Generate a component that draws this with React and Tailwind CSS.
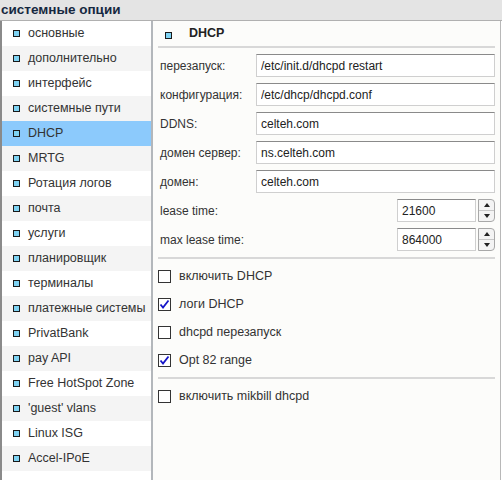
import { useState } from 'react';

const menu = [
    'основные',
    'дополнительно',
    'интерфейс',
    'системные пути',
    'DHCP',
    'MRTG',
    'Ротация логов',
    'почта',
    'услуги',
    'планировщик',
    'терминалы',
    'платежные системы',
    'PrivatBank',
    'pay API',
    'Free HotSpot Zone',
    "'guest' vlans",
    'Linux ISG',
    'Accel-IPoE'
];

const fields = [
    { label: 'перезапуск:', value: '/etc/init.d/dhcpd restart' },
    { label: 'конфигурация:', value: '/etc/dhcp/dhcpd.conf' },
    { label: 'DDNS:', value: 'celteh.com' },
    { label: 'домен сервер:', value: 'ns.celteh.com' },
    { label: 'домен:', value: 'celteh.com' }
];

const Bullet = () => (
    <span className="inline-block w-[7px] h-[7px] border border-[#1a1a1a] bg-[#7fd3f3] shrink-0" />
);

const Check = ({ checked, label, onToggle }) => (
    <div className="h-[28px] flex items-center cursor-pointer" onClick={onToggle}>
        <span className="w-[13px] h-[13px] border border-[#333] bg-white flex items-center justify-center">
            {checked && (
                <svg width="11" height="11" viewBox="0 0 11 11">
                    <path d="M1.5 5.5 L4 8.5 L9.5 1.5" fill="none" stroke="#1515c8" strokeWidth="1.8" />
                </svg>
            )}
        </span>
        <span className="ml-[8px] text-[12.5px] text-[#333]">{label}</span>
    </div>
);

const Spinner = () => (
    <div className="w-[17px] h-[23px] border border-[#a8a8a8] rounded-r-[4px] flex flex-col bg-[#f4f4f4] ml-[2px]">
        <div className="flex-1 flex items-center justify-center border-b border-[#c8c8c8]">
            <span className="w-0 h-0 border-l-[3px] border-r-[3px] border-b-[4px] border-l-transparent border-r-transparent border-b-[#222]" />
        </div>
        <div className="flex-1 flex items-center justify-center">
            <span className="w-0 h-0 border-l-[3px] border-r-[3px] border-t-[4px] border-l-transparent border-r-transparent border-t-[#222]" />
        </div>
    </div>
);

const inputCls = 'h-[23px] border border-[#cfcfcf] border-t-[#8a8a8a] bg-white px-[4px] text-[12px] text-[#222] outline-none';

export default function App() {
    const [checks, setChecks] = useState({ dhcp: false, logs: true, restart: false, opt82: true, mikbill: false });
    const toggle = (k) => setChecks({ ...checks, [k]: !checks[k] });

    return (
        <div className="w-[502px] h-[480px] bg-white flex flex-col overflow-hidden" style={{ fontFamily: '"Liberation Sans", Arial, sans-serif' }}>
            {/* Header */}
            <div className="h-[21px] shrink-0 bg-[#e4e4e4] border-b border-[#b0b0b0] flex items-center pl-[1px]">
                <span className="text-[13.5px] font-bold text-[#152840]">системные опции</span>
            </div>

            <div className="flex flex-1 min-h-0">
                {/* Sidebar */}
                <div className="w-[151px] shrink-0 border-l-2 border-[#8a8a8a] bg-white">
                    {menu.map((item, index) => (
                        <div
                            key={index}
                            className={`h-[25px] flex items-center pl-[11px] ${item === 'DHCP'
                                ? 'bg-[#8ccafc]'
                                : index % 2 === 1 ? 'bg-[#f4f4f4]' : 'bg-white'
                                }`}
                        >
                            <Bullet />
                            <span className="ml-[8px] text-[12.5px] text-[#333] whitespace-nowrap">{item}</span>
                        </div>
                    ))}
                </div>
                <div className="w-[2px] shrink-0 bg-[#b3b7bb]" />

                {/* Main */}
                <div className="w-[348px] shrink-0 bg-[#fcfcfa] border-r border-[#b8b8b8] px-[5px]">
                    <div className="h-[27px] flex items-center border-b-2 border-[#d8d8d8]">
                        <span className="ml-[7px]"><Bullet /></span>
                        <span className="ml-[17px] text-[12.5px] font-bold text-[#222]">DHCP</span>
                    </div>

                    <div className="pt-[6px]">
                        {fields.map((f, i) => (
                            <div key={i} className="flex items-center h-[23px] mb-[6px]">
                                <span className="w-[98px] pl-[2px] text-[12px] text-[#333]">{f.label}</span>
                                <input className={`${inputCls} flex-1`} defaultValue={f.value} />
                            </div>
                        ))}
                        <div className="flex items-center h-[23px] mb-[6px]">
                            <span className="flex-1 pl-[2px] text-[12px] text-[#333]">lease time:</span>
                            <input className={`${inputCls} w-[79px]`} defaultValue="21600" />
                            <Spinner />
                        </div>
                        <div className="flex items-center h-[23px] mb-[6px]">
                            <span className="flex-1 pl-[2px] text-[12px] text-[#333]">max lease time:</span>
                            <input className={`${inputCls} w-[79px]`} defaultValue="864000" />
                            <Spinner />
                        </div>
                    </div>

                    <div className="border-t-2 border-[#d8d8d8] py-[3px]">
                        <Check checked={checks.dhcp} label="включить DHCP" onToggle={() => toggle('dhcp')} />
                        <Check checked={checks.logs} label="логи DHCP" onToggle={() => toggle('logs')} />
                        <Check checked={checks.restart} label="dhcpd перезапуск" onToggle={() => toggle('restart')} />
                        <Check checked={checks.opt82} label="Opt 82 range" onToggle={() => toggle('opt82')} />
                    </div>
                    <div className="border-t-2 border-[#d8d8d8] pt-[3px]">
                        <Check checked={checks.mikbill} label="включить mikbill dhcpd" onToggle={() => toggle('mikbill')} />
                    </div>
                </div>
            </div>
        </div>
    );
}
